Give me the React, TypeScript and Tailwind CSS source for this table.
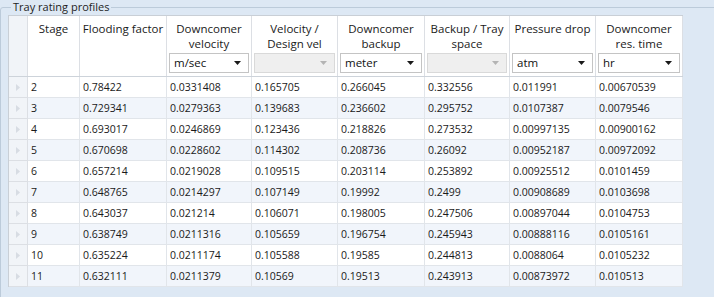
const FONT = { fontFamily: '"Open Sans", "Noto Sans", sans-serif' };

type Head = { lines: string[]; unit?: string; disabled?: boolean };

const heads: Head[] = [
  { lines: ["Stage"] },
  { lines: ["Flooding factor"] },
  { lines: ["Downcomer", "velocity"], unit: "m/sec" },
  { lines: ["Velocity /", "Design vel"], unit: "", disabled: true },
  { lines: ["Downcomer", "backup"], unit: "meter" },
  { lines: ["Backup / Tray", "space"], unit: "", disabled: true },
  { lines: ["Pressure drop"], unit: "atm" },
  { lines: ["Downcomer", "res. time"], unit: "hr" },
];

const rows: string[][] = [
  ["2", "0.78422", "0.0331408", "0.165705", "0.266045", "0.332556", "0.011991", "0.00670539"],
  ["3", "0.729341", "0.0279363", "0.139683", "0.236602", "0.295752", "0.0107387", "0.0079546"],
  ["4", "0.693017", "0.0246869", "0.123436", "0.218826", "0.273532", "0.00997135", "0.00900162"],
  ["5", "0.670698", "0.0228602", "0.114302", "0.208736", "0.26092", "0.00952187", "0.00972092"],
  ["6", "0.657214", "0.0219028", "0.109515", "0.203114", "0.253892", "0.00925512", "0.0101459"],
  ["7", "0.648765", "0.0214297", "0.107149", "0.19992", "0.2499", "0.00908689", "0.0103698"],
  ["8", "0.643037", "0.021214", "0.106071", "0.198005", "0.247506", "0.00897044", "0.0104753"],
  ["9", "0.638749", "0.0211316", "0.105659", "0.196754", "0.245943", "0.00888116", "0.0105161"],
  ["10", "0.635224", "0.0211174", "0.105588", "0.19585", "0.244813", "0.0088064", "0.0105232"],
  ["11", "0.632111", "0.0211379", "0.10569", "0.19513", "0.243913", "0.00873972", "0.010513"],
];

function Arrow({ disabled }: { disabled?: boolean }) {
  return (
    <svg width="7" height="4" viewBox="0 0 7 4" className="shrink-0">
      <polygon points="0,0 7,0 3.5,4" fill={disabled ? "#b4b4b4" : "#1a1a1a"} />
    </svg>
  );
}

function UnitSelect({ unit, disabled }: { unit: string; disabled?: boolean }) {
  return (
    <div
      className={
        disabled
          ? "mx-[2px] h-[20px] flex items-center justify-between pl-[4px] pr-[7px] border border-[#d9d9d9] bg-[#efefef]"
          : "mx-[2px] h-[20px] flex items-center justify-between pl-[4px] pr-[7px] border border-[#c4c4c4] bg-white"
      }
    >
      <span className="text-[11.5px] leading-none text-[#111]">{unit}</span>
      <Arrow disabled={disabled} />
    </div>
  );
}

function RowMarker() {
  return (
    <svg width="4" height="7" viewBox="0 0 4 7">
      <polygon points="0,0 4,3.5 0,7" fill="#d7dce3" />
    </svg>
  );
}

export default function App() {
  return (
    <div className="w-[714px] h-[297px] overflow-hidden bg-[#dde8f4] text-[#1a1a1a]" style={FONT}>
      <fieldset className="w-[740px] h-[320px] border border-[#bccbda] rounded-[3px] pl-[7px] pt-0">
        <legend className="ml-[3px] px-[2px] text-[11px] leading-[14px] text-[#1e1e1e]">
          Tray rating profiles
        </legend>

        <div className="mt-[1px] w-[675px] border-l border-t border-[#c9cfd6] bg-white">
          {/* header */}
          <div className="grid grid-cols-[19px_52px_87px_85px_86px_87px_85px_86px_87px] h-[61px] border-b border-[#cdd3da]">
            <div className="border-r border-[#dcdfe4] bg-[#f1f4f8]" />
            {heads.map((h, i) => (
              <div
                key={i}
                className="flex flex-col justify-between pt-[5px] pb-[3px] border-r border-[#dcdfe4] bg-white"
              >
                <div className="text-center text-[11.5px] leading-[15px] text-[#1a1a1a]">
                  {h.lines.map((l) => (
                    <div key={l}>{l}</div>
                  ))}
                </div>
                {h.unit !== undefined && <UnitSelect unit={h.unit} disabled={h.disabled} />}
              </div>
            ))}
          </div>

          {/* body */}
          {rows.map((r, ri) => (
            <div
              key={ri}
              className={
                ri % 2 === 1
                  ? "grid grid-cols-[19px_52px_87px_85px_86px_87px_85px_86px_87px] h-[21px] bg-[#f1f5fb]"
                  : "grid grid-cols-[19px_52px_87px_85px_86px_87px_85px_86px_87px] h-[21px] bg-white"
              }
            >
              <div className="flex items-center justify-center border-r border-b border-[#dcdfe4] bg-[#f1f4f8]">
                <RowMarker />
              </div>
              {r.map((v, ci) => (
                <div
                  key={ci}
                  className="flex items-center px-[3px] border-r border-b border-[#e1e5ea] text-[10.5px] leading-none whitespace-nowrap"
                >
                  {v}
                </div>
              ))}
            </div>
          ))}
        </div>
      </fieldset>
    </div>
  );
}
